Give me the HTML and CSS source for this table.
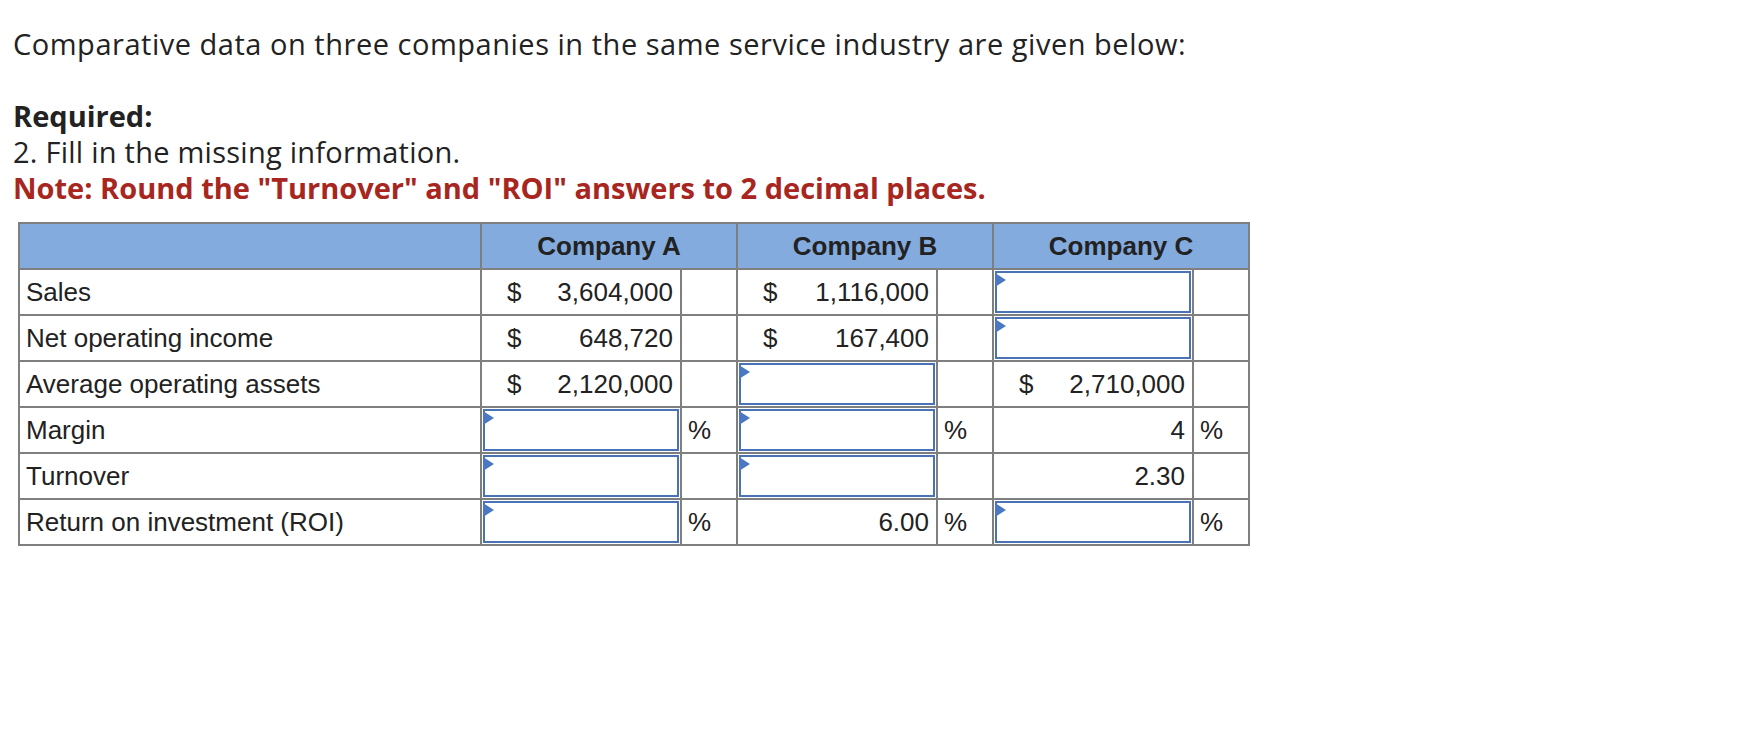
FILE: index.html
```html
<!DOCTYPE html>
<html lang="en">
<head>
<meta charset="utf-8">
<title>Comparative data</title>
<link rel="stylesheet" href="styles.css">
</head>
<body>
<div class="page">
  <div class="question">
    <p class="intro">Comparative data on three companies in the same service industry are given below:</p>
    <p class="task"><strong class="req">Required:</strong><br><span class="step">2. Fill in the missing information.</span><br><strong class="note">Note: Round the "Turnover" and "ROI" answers to 2 decimal places.</strong></p>
  </div>

  <table class="data">
    <colgroup>
      <col class="c-label">
      <col class="c-val"><col class="c-unit">
      <col class="c-val"><col class="c-unit">
      <col class="c-val"><col class="c-unit">
    </colgroup>
    <thead>
      <tr>
        <th></th>
        <th colspan="2">Company A</th>
        <th colspan="2">Company B</th>
        <th colspan="2">Company C</th>
      </tr>
    </thead>
    <tbody>
      <tr>
        <td class="label">Sales</td>
        <td class="val"><div class="money"><span>$</span><span>3,604,000</span></div></td>
        <td class="unit"></td>
        <td class="val"><div class="money"><span>$</span><span>1,116,000</span></div></td>
        <td class="unit"></td>
        <td class="inp"><div class="field"><input type="text" aria-label="Company C sales"><span class="marker"></span></div></td>
        <td class="unit"></td>
      </tr>
      <tr>
        <td class="label">Net operating income</td>
        <td class="val"><div class="money"><span>$</span><span>648,720</span></div></td>
        <td class="unit"></td>
        <td class="val"><div class="money"><span>$</span><span>167,400</span></div></td>
        <td class="unit"></td>
        <td class="inp"><div class="field"><input type="text" aria-label="Company C net operating income"><span class="marker"></span></div></td>
        <td class="unit"></td>
      </tr>
      <tr>
        <td class="label">Average operating assets</td>
        <td class="val"><div class="money"><span>$</span><span>2,120,000</span></div></td>
        <td class="unit"></td>
        <td class="inp"><div class="field"><input type="text" aria-label="Company B average operating assets"><span class="marker"></span></div></td>
        <td class="unit"></td>
        <td class="val"><div class="money"><span>$</span><span>2,710,000</span></div></td>
        <td class="unit"></td>
      </tr>
      <tr>
        <td class="label">Margin</td>
        <td class="inp"><div class="field"><input type="text" aria-label="Company A margin"><span class="marker"></span></div></td>
        <td class="unit">%</td>
        <td class="inp"><div class="field"><input type="text" aria-label="Company B margin"><span class="marker"></span></div></td>
        <td class="unit">%</td>
        <td class="val num">4</td>
        <td class="unit">%</td>
      </tr>
      <tr>
        <td class="label">Turnover</td>
        <td class="inp"><div class="field"><input type="text" aria-label="Company A turnover"><span class="marker"></span></div></td>
        <td class="unit"></td>
        <td class="inp"><div class="field"><input type="text" aria-label="Company B turnover"><span class="marker"></span></div></td>
        <td class="unit"></td>
        <td class="val num">2.30</td>
        <td class="unit"></td>
      </tr>
      <tr>
        <td class="label">Return on investment (ROI)</td>
        <td class="inp"><div class="field"><input type="text" aria-label="Company A ROI"><span class="marker"></span></div></td>
        <td class="unit">%</td>
        <td class="val num">6.00</td>
        <td class="unit">%</td>
        <td class="inp"><div class="field"><input type="text" aria-label="Company C ROI"><span class="marker"></span></div></td>
        <td class="unit">%</td>
      </tr>
    </tbody>
  </table>
</div>
</body>
</html>
```

FILE: styles.css
```css
html, body {
  margin: 0;
  padding: 0;
  background: #ffffff;
}

.page {
  padding: 26px 0 0 13px;
}

.question {
  font-family: "Open Sans", "Noto Sans", sans-serif;
  font-size: 29px;
  line-height: 36px;
  color: #222222;
}

.question p {
  margin: 0;
}

.question .intro {
  margin-bottom: 36px;
  letter-spacing: 0.52px;
}

.step {
  letter-spacing: 0.25px;
}

.req {
  font-weight: 700;
}

.note {
  font-weight: 700;
  color: #a82620;
}

.data {
  margin: 16px 0 0 5px;
  border-collapse: separate;
  border-spacing: 0;
  table-layout: fixed;
  width: 1232px;
  border-top: 2px solid #7f7f7f;
  border-left: 2px solid #7f7f7f;
  font-family: "Liberation Sans", Arial, sans-serif;
  font-size: 26px;
  color: #222222;
}

.c-label { width: 462px; }
.c-val { width: 200px; }
.c-unit { width: 56px; }

.data th,
.data td {
  height: 44px;
  padding: 0;
  border-right: 2px solid #7f7f7f;
  border-bottom: 2px solid #7f7f7f;
  vertical-align: middle;
  white-space: nowrap;
}

.data th {
  background: #84abde;
  font-weight: 700;
  text-align: center;
}

.data td.label {
  padding-left: 6px;
  text-align: left;
}

.money {
  display: flex;
  justify-content: space-between;
  padding: 0 7px 0 25px;
}

.data td.num {
  text-align: right;
  padding-right: 7px;
}

.data td.unit {
  padding-left: 6px;
  text-align: left;
}

.field {
  position: relative;
  height: 42px;
  margin: 1px;
  box-sizing: border-box;
  border: 2px solid #4a73b5;
  background: #ffffff;
}

.field input {
  display: block;
  width: 100%;
  height: 100%;
  box-sizing: border-box;
  border: 0;
  margin: 0;
  padding: 0 6px;
  background: transparent;
  font: inherit;
  color: inherit;
  outline: none;
}

.marker {
  position: absolute;
  z-index: 1;
  left: -2px;
  top: 0;
  width: 0;
  height: 0;
  border-left: 11px solid #4a78c2;
  border-top: 7px solid transparent;
  border-bottom: 7px solid transparent;
}
```
